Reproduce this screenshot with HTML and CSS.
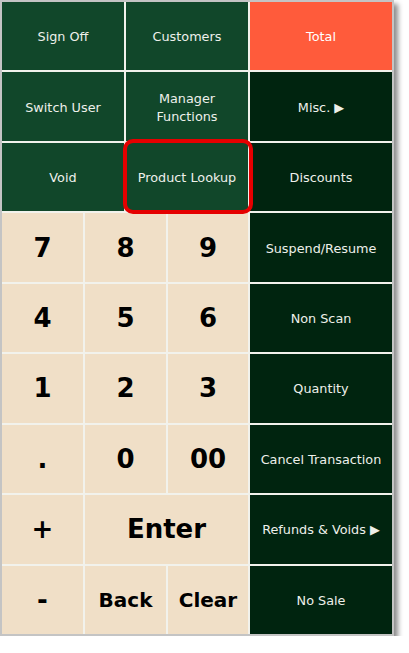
FILE: index.html
```html
<!DOCTYPE html>
<html lang="en">
<head>
	<meta charset="UTF-8">
	<title>Register Keypad</title>
	<link rel="stylesheet" href="styles.css">
</head>
<body>
	<div class="pad">
		<div class="key green wide">Sign Off</div>
		<div class="key green wide">Customers</div>
		<div class="key total">Total</div>

		<div class="key green wide">Switch User</div>
		<div class="key green wide">Manager<br>Functions</div>
		<div class="key dark">Misc. &#9654;</div>

		<div class="key green wide">Void</div>
		<div class="key green wide lookup">Product Lookup<span class="highlight"></span></div>
		<div class="key dark">Discounts</div>

		<div class="key num">7</div>
		<div class="key num wide">8</div>
		<div class="key num">9</div>
		<div class="key dark">Suspend/Resume</div>

		<div class="key num">4</div>
		<div class="key num wide">5</div>
		<div class="key num">6</div>
		<div class="key dark">Non Scan</div>

		<div class="key num">1</div>
		<div class="key num wide">2</div>
		<div class="key num">3</div>
		<div class="key dark">Quantity</div>

		<div class="key num">.</div>
		<div class="key num wide">0</div>
		<div class="key num">00</div>
		<div class="key dark">Cancel Transaction</div>

		<div class="key num">+</div>
		<div class="key num enter">Enter</div>
		<div class="key dark">Refunds &amp; Voids &#9654;</div>

		<div class="key num">-</div>
		<div class="key num wide word">Back</div>
		<div class="key num word">Clear</div>
		<div class="key dark">No Sale</div>
	</div>
</body>
</html>
```

FILE: styles.css
```css
* {
	margin: 0;
	padding: 0;
	box-sizing: content-box;
}

body {
	background-color: #fff;
	font-family: "DejaVu Sans", Verdana, sans-serif;
}

.pad {
	display: grid;
	grid-template-columns: 81px 39px 40px 80px 142px;
	grid-template-rows: repeat(9, 1fr);
	gap: 2px;
	width: 390px;
	height: 632px;
	background-color: #f2f2ec;
	border: 2px solid #c4c4c4;
	box-shadow: 4px 4px 5px rgba(0, 0, 0, 0.45);
}

.key {
	display: flex;
	align-items: center;
	justify-content: center;
	text-align: center;
	padding-top: 2px;
	font-size: 12.8px;
	line-height: 18px;
	color: #eef0ea;
	position: relative;
}

.wide {
	grid-column: span 2;
}

.green {
	background-color: #11472a;
}

.dark {
	background-color: #00240f;
}

.total {
	background-color: #ff5b3b;
	color: #fff;
}

.num {
	padding-top: 0;
	background-color: #f0dfc7;
	color: #000;
	font-size: 26px;
	font-weight: bold;
}

.enter {
	grid-column: span 3;
}

.word {
	font-size: 20px;
}

.highlight {
	position: absolute;
	top: -4px;
	left: -3px;
	right: -5px;
	bottom: -3px;
	border: 4px solid #e50000;
	border-radius: 10px;
	z-index: 2;
	box-sizing: border-box;
}
```
